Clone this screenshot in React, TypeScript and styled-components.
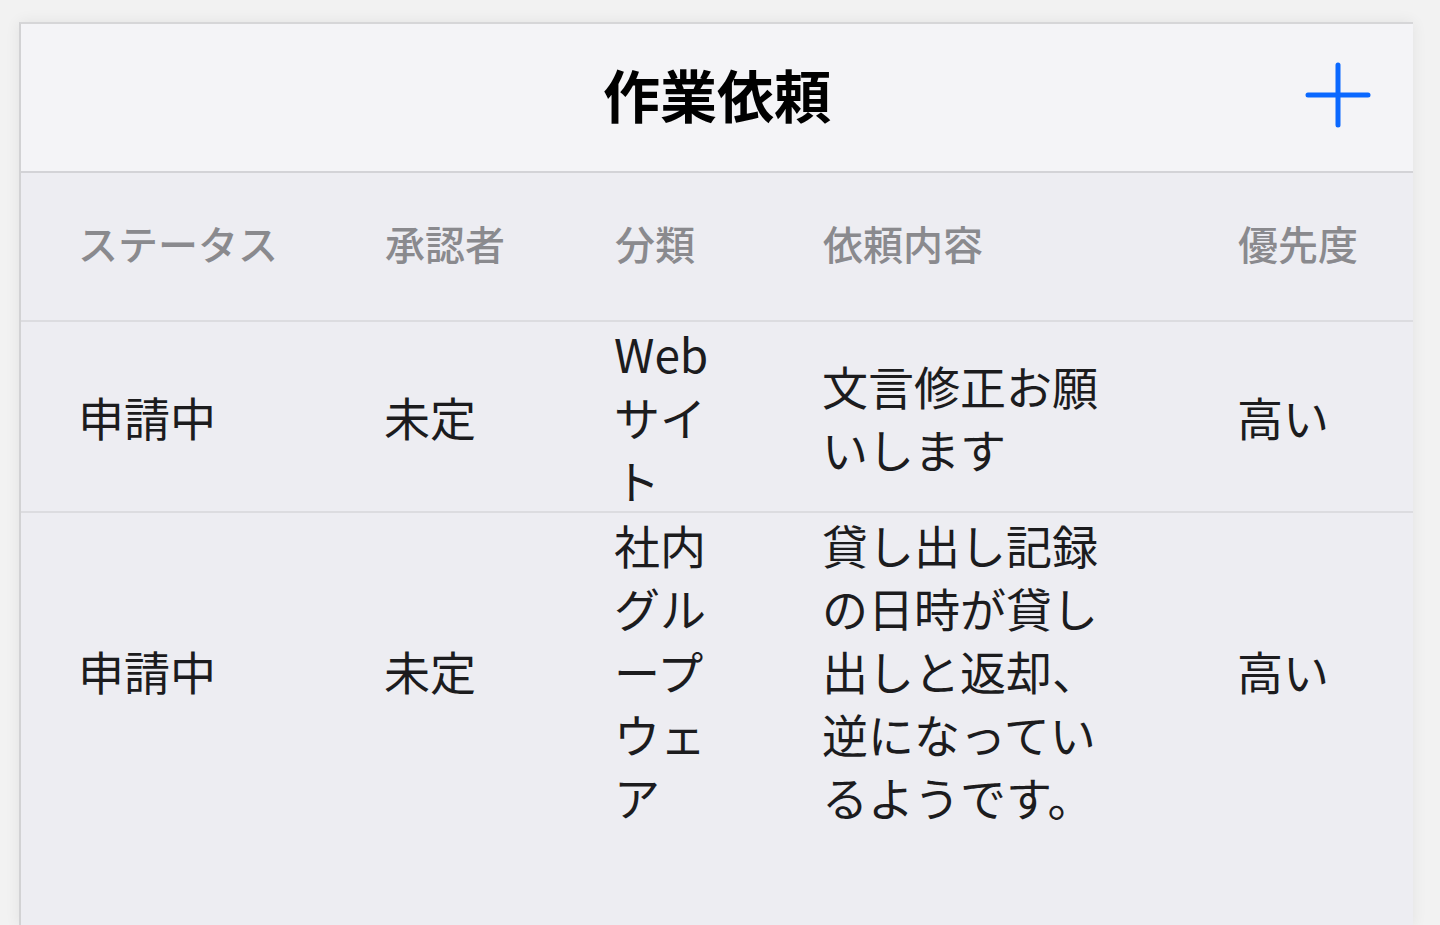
import React from 'react'
import styled, { createGlobalStyle } from 'styled-components'

const GlobalStyle = createGlobalStyle`
  html, body {
    margin: 0;
    padding: 0;
    height: 100%;
    overflow: hidden;
    background: #f2f2f2;
    font-family: "Noto Sans CJK JP", "Noto Sans", sans-serif;
  }
`

const Page = styled.div`
  padding: 22px 27px 0 19px;
  height: 925px;
  box-sizing: border-box;
`

const Panel = styled.div`
  height: 100%;
  background: #ededf2;
  border-top: 2px solid #d6d6d8;
  border-left: 2px solid #d2d2d4;
  box-shadow: 0 0 14px rgba(0, 0, 0, 0.07);
  display: flex;
  flex-direction: column;
`

const NavBar = styled.header`
  height: 147px;
  background: #f4f4f7;
  border-bottom: 2px solid #d3d3d7;
  display: grid;
  grid-template-columns: 1fr auto 1fr;
  align-items: center;
`

const Title = styled.h1`
  grid-column: 2;
  margin: 0 0 10px;
  font-size: 57px;
  font-weight: 700;
  color: #000;
`

const AddButton = styled.button`
  grid-column: 3;
  justify-self: end;
  margin: 0 40px 6px 0;
  width: 70px;
  height: 70px;
  padding: 0;
  border: none;
  background: none;
  display: flex;
  align-items: center;
  justify-content: center;
`

const Table = styled.div`
  display: grid;
  grid-template-columns: 309px 230px 208px 415px 1fr;
`

const HeadCell = styled.div<{ $first?: boolean }>`
  height: 149px;
  display: flex;
  align-items: center;
  box-sizing: border-box;
  padding: 0 0 8px ${p => (p.$first ? '57px' : '55px')};
  border-bottom: 2px solid #dcdce0;
  font-size: 40px;
  font-weight: 500;
  color: #8a8a8e;
  white-space: nowrap;
`

const Cell = styled.div<{ $first?: boolean; $last?: boolean }>`
  display: flex;
  align-items: center;
  padding: 0 44px 0 ${p => (p.$first ? '57px' : '54px')};
  border-bottom: ${p => (p.$last ? 'none' : '2px solid #dcdce0')};
  font-size: 46px;
  line-height: 63px;
  color: #1c1c1e;
  line-break: loose;
`

const PlusIcon = () => (
  <svg width="66" height="66" viewBox="0 0 66 66">
    <g stroke="#0a68ff" strokeWidth="5" strokeLinecap="round">
      <line x1="33" y1="3" x2="33" y2="63" />
      <line x1="3" y1="33" x2="63" y2="33" />
    </g>
  </svg>
)

const headers = ['ステータス', '承認者', '分類', '依頼内容', '優先度']

const rows = [
  ['申請中', '未定', 'Webサイト', '文言修正お願いします', '高い'],
  ['申請中', '未定', '社内グループウェア', '貸し出し記録の日時が貸し出しと返却、逆になっているようです。', '高い'],
]

export default function App() {
  return (
    <>
      <GlobalStyle />
      <Page>
        <Panel>
          <NavBar>
            <Title>作業依頼</Title>
            <AddButton aria-label="追加">
              <PlusIcon />
            </AddButton>
          </NavBar>
          <Table>
            {headers.map((h, i) => (
              <HeadCell key={h} $first={i === 0}>{h}</HeadCell>
            ))}
            {rows.map((r, ri) =>
              r.map((c, ci) => (
                <Cell
                  key={`${ri}-${ci}`}
                  $first={ci === 0}
                  $last={ri === rows.length - 1}
                >
                  {c}
                </Cell>
              ))
            )}
          </Table>
        </Panel>
      </Page>
    </>
  )
}
